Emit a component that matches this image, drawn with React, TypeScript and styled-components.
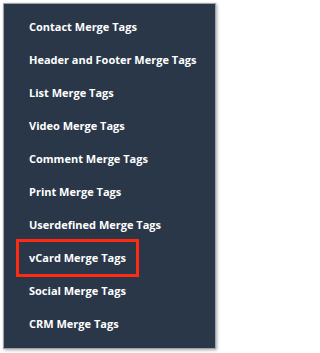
import React from "react";
import styled, { createGlobalStyle } from "styled-components";

const GlobalStyle = createGlobalStyle`
  html, body {
    margin: 0;
    padding: 0;
    background: #ffffff;
  }
`;

const Page = styled.div`
  padding: 3px 5px 6px 3px;
`;

const Menu = styled.ul`
  list-style: none;
  margin: 0;
  padding: 6px 0 8px;
  width: 213px;
  box-sizing: border-box;
  background-color: #2a3749;
  border: 1px solid #9ea3a9;
  box-shadow: 1px 1px 3px rgba(0, 0, 0, 0.35);
`;

const Item = styled.li`
  height: 33px;
  display: flex;
  align-items: center;
  padding-left: 25px;
  font-family: "Open Sans", "Liberation Sans", sans-serif;
  font-weight: 700;
  font-size: 11px;
  color: #ffffff;
`;

const Label = styled.span<{ highlighted?: boolean }>`
  position: relative;
  line-height: 16px;

  &::after {
    content: "";
    display: ${(props) => (props.highlighted ? "block" : "none")};
    position: absolute;
    left: -13px;
    right: -13px;
    top: -11px;
    bottom: -11px;
    border: 3px solid #ff2a12;
  }
`;

const items = [
  "Contact Merge Tags",
  "Header and Footer Merge Tags",
  "List Merge Tags",
  "Video Merge Tags",
  "Comment Merge Tags",
  "Print Merge Tags",
  "Userdefined Merge Tags",
  "vCard Merge Tags",
  "Social Merge Tags",
  "CRM Merge Tags",
];

function App() {
  return (
    <Page>
      <GlobalStyle />
      <Menu>
        {items.map((name) => (
          <Item key={name}>
            <Label highlighted={name === "vCard Merge Tags"}>{name}</Label>
          </Item>
        ))}
      </Menu>
    </Page>
  );
}

export default App;
